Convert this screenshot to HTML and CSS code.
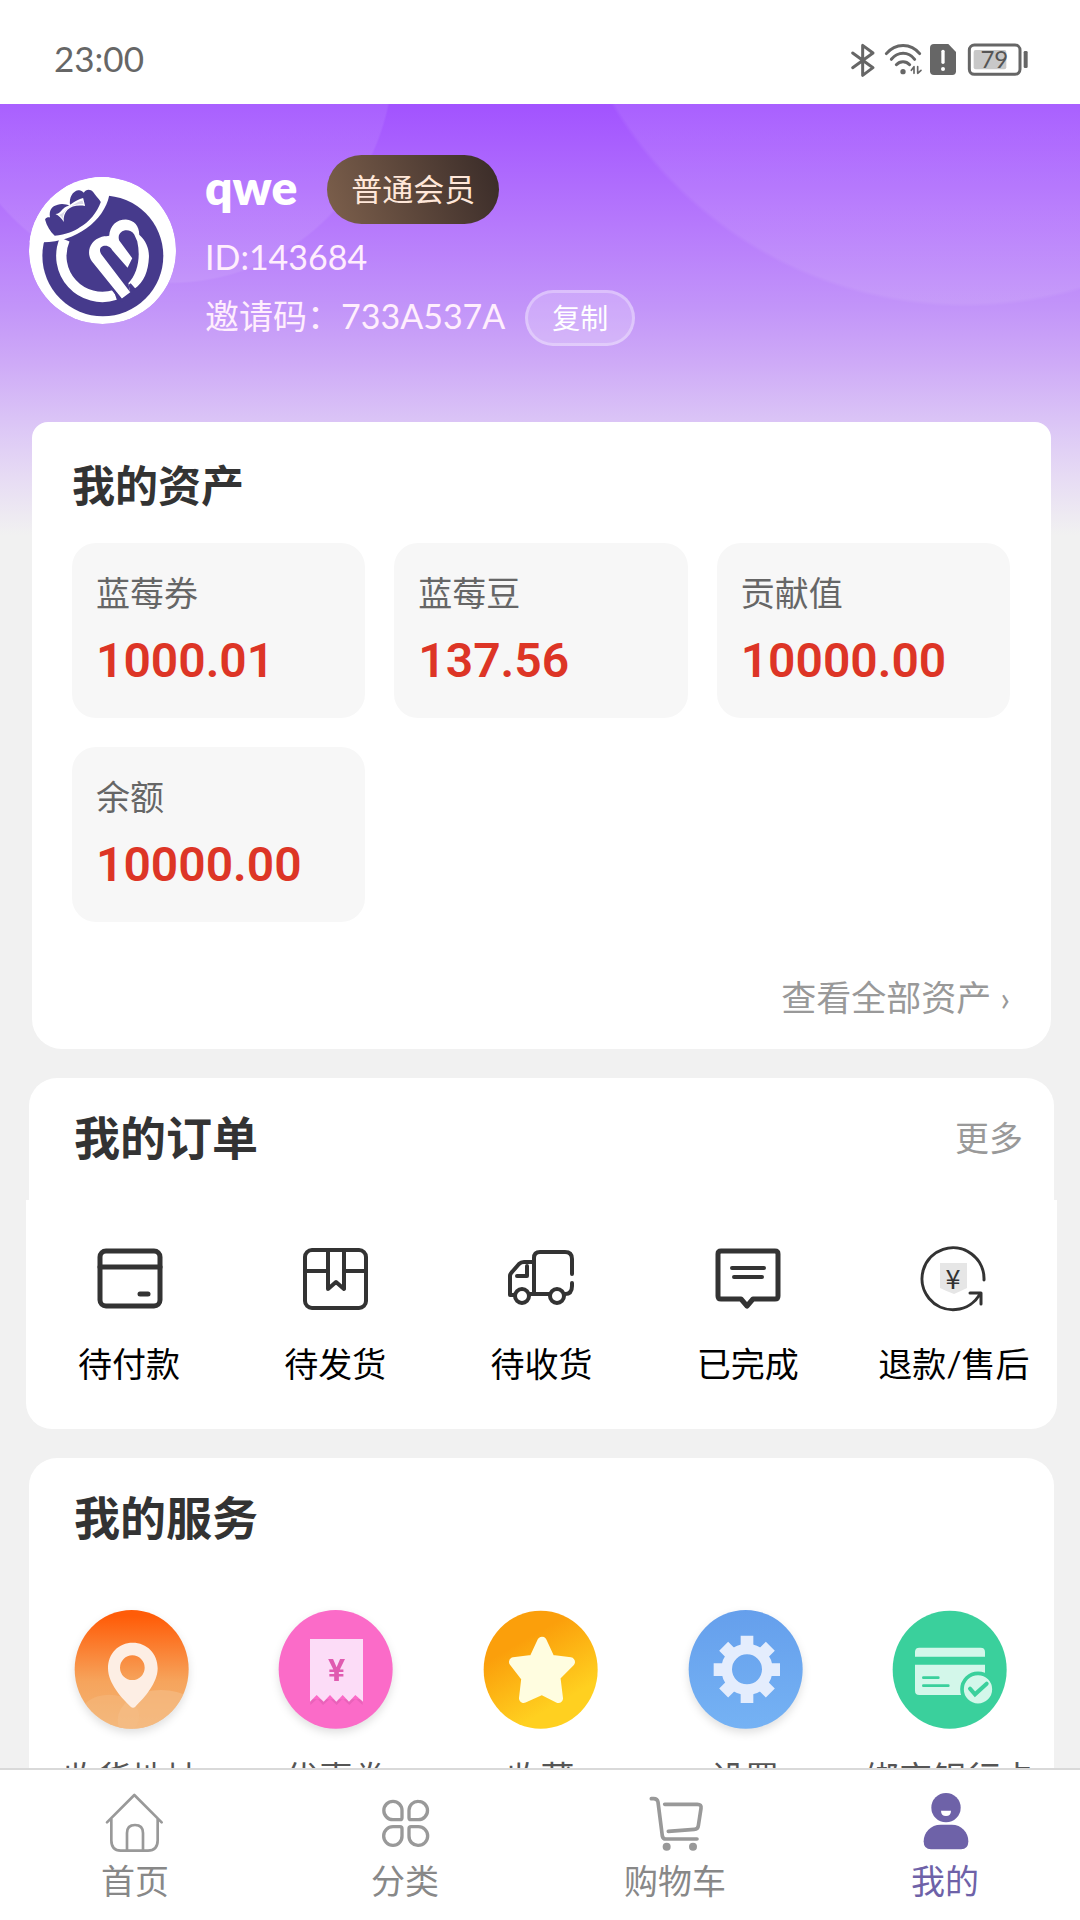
FILE: index.html
```html
<!DOCTYPE html>
<html lang="zh-CN">
<head>
    <meta charset="UTF-8">
    <meta name="viewport" content="width=device-width, initial-scale=1.0">
    <title>我的</title>
    <link rel="stylesheet" href="styles.css">
</head>
<body>
    <!-- Status bar -->
    <div class="status-bar">
        <span class="time">23:00</span>
        <svg class="status-icons" viewBox="60 30 540 120" fill="none" stroke="#666" stroke-width="9" stroke-linecap="round" stroke-linejoin="round">
            <path d="M68 69L129 113L98 136V46L129 69L68 113"/>
            <path d="M169 71C196 38 243 38 269 71M184 88C204 64 235 64 254 88M199 104C210 92 228 92 239 104"/>
            <circle cx="219" cy="125" r="8" fill="#666" stroke="none"/>
            <path d="M252 130V110L244 121M263 110V130L273 121" stroke-width="5"/>
            <path d="M312 42H355L378 66V124Q378 135 367 135H312Q300 135 300 124V54Q300 42 312 42Z" fill="#666" stroke="none"/>
            <path d="M339 64V97" stroke="#fff" stroke-width="10"/>
            <circle cx="339" cy="117" r="6" fill="#fff" stroke="none"/>
            <rect x="418" y="45" width="152" height="88" rx="15"/>
            <rect x="431" y="60" width="98" height="58" rx="6" fill="#c8c8c8" stroke="none"/>
            <rect x="581" y="63" width="12" height="51" rx="4" fill="#666" stroke="none"/>
            <text class="battery" x="493" y="114" text-anchor="middle">79</text>
        </svg>
    </div>

    <main class="page">
        <!-- User info -->
        <section class="profile">
            <svg class="avatar" viewBox="0 0 440 440">
                <circle cx="220" cy="220" r="220" fill="#fff"/>
                <circle cx="221" cy="236" r="181" fill="#463a8c"/>
                <path d="M0 0H240V55C225 130 140 195 42 195H0Z" fill="#fff"/>
                <!-- flower -->
                <path d="M77 176C64 163 53 147 48 127C52 121 57 120 63 121C59 101 68 87 86 83C99 79 112 82 123 86C119 61 131 43 147 40C153 38 159 42 164 47C170 36 184 35 192 45C199 56 208 63 215 75C203 107 181 135 151 151C139 161 110 172 77 176Z" fill="#463a8c"/>
                <path d="M79 111C97 108 96 96 112 88C125 86 135 70 162 63L168 87C128 80 101 99 104 135C98 124 91 117 79 111Z" fill="#fff"/>
                <path d="M89 114C105 109 112 92 128 86C138 80 148 73 160 70L163 81C130 80 103 94 101 125C98 120 94 116 89 114Z" fill="#463a8c" opacity="0.2"/>
                <!-- monogram -->
                <path d="M107 187A123 123 0 0 0 258 353" fill="none" stroke="#fff" stroke-width="31"/>
                <path d="M278 364L188 252C170 226 182 190 218 179C228 176 236 178 240 176C242 145 262 127 290 127C315 130 330 145 330 173C350 190 360 215 359 240C357 280 345 315 315 335L297 318L303 345Z" fill="#fff"/>
                <path d="M228 206C240 206 246 214 250 220L295 272L309 243L270 190C260 160 300 148 315 172L324 192C335 240 325 290 297 318L303 345L217 232C207 217 215 206 228 206Z" fill="#463a8c"/>
                <path d="M248 334L278 372M302 320L318 338" fill="none" stroke="#463a8c" stroke-width="6"/>
            </svg>
            <div class="user">
                <div class="name-row">
                    <h1>qwe</h1>
                    <span class="level">普通会员</span>
                </div>
                <div class="uid">ID:143684</div>
                <div class="invite">
                    <span>邀请码：733A537A</span>
                    <button class="copy" type="button">复制</button>
                </div>
            </div>
        </section>

        <!-- Assets -->
        <section class="card assets">
            <h2>我的资产</h2>
            <div class="asset-grid">
                <div class="asset"><span>蓝莓券</span><strong>1000.01</strong></div>
                <div class="asset"><span>蓝莓豆</span><strong>137.56</strong></div>
                <div class="asset"><span>贡献值</span><strong>10000.00</strong></div>
                <div class="asset"><span>余额</span><strong>10000.00</strong></div>
            </div>
            <a class="all-assets" href="#">查看全部资产 ›</a>
        </section>

        <!-- Orders -->
        <section class="card orders">
            <div class="card-head">
                <h2>我的订单</h2>
                <a href="#">更多</a>
            </div>
            <div class="order-list">
                <a href="#">
                    <svg viewBox="0 0 72 72">
                        <rect x="7" y="8" width="60" height="55" rx="6" stroke-width="5"/>
                        <path d="M7 24H67" stroke-width="5"/>
                        <path d="M47 51H55" stroke-width="5"/>
                    </svg>
                    待付款
                </a>
                <a href="#">
                    <svg viewBox="0 0 72 72">
                        <rect x="6" y="7" width="61" height="58" rx="7"/>
                        <path d="M6 28H29M45 28H67M29 8V46L37 39L45 46V8"/>
                    </svg>
                    待发货
                </a>
                <a href="#">
                    <svg viewBox="0 0 72 72">
                        <path d="M9 52H5V33Q5 31 7 29L14 21Q16 19 19 19H28M29 51V15Q29 9 35 9H60Q67 9 67 16V31M67 40V43Q67 51 60 51M25 51H44M22 23V33H12"/>
                        <circle cx="17" cy="53" r="7"/>
                        <circle cx="52" cy="53" r="7"/>
                    </svg>
                    待收货
                </a>
                <a href="#">
                    <svg viewBox="0 0 72 72">
                        <path d="M9 8H63Q66 8 66 11V53Q66 56 63 56H41L35 63L29 56H9Q6 56 6 53V11Q6 8 9 8Z" stroke-width="5"/>
                        <path d="M20 25H52M22 34H50" stroke-width="4"/>
                    </svg>
                    已完成
                </a>
                <a href="#">
                    <svg viewBox="0 0 72 72">
                        <path d="M22 20H49V45Q43 48 36 51Q28 48 22 45Z" fill="#e6e6e6" stroke="none"/>
                        <path d="M66 37A31 31 0 1 0 62 51M52 50H63V61" stroke-width="3"/>
                        <text class="refund-yen" x="35" y="46" text-anchor="middle">¥</text>
                    </svg>
                    退款/售后
                </a>
            </div>
        </section>

        <!-- Services -->
        <section class="card services">
            <div class="card-head">
                <h2>我的服务</h2>
            </div>
            <div class="service-list">
                <a href="#">
                    <svg class="shadow" viewBox="100 60 343 357">
                        <defs>
                            <linearGradient id="orange" x1="0" y1="0" x2="0" y2="1">
                                <stop offset="0.05" stop-color="#ff5c08"/>
                                <stop offset="0.6" stop-color="#f6a45c"/>
                                <stop offset="1" stop-color="#f3b475"/>
                            </linearGradient>
                            <clipPath id="pin-clip"><ellipse cx="272" cy="238" rx="171" ry="178"/></clipPath>
                        </defs>
                        <ellipse cx="272" cy="238" rx="171" ry="178" fill="url(#orange)"/>
                        <g clip-path="url(#pin-clip)" fill="#f5be88">
                            <ellipse cx="360" cy="390" rx="130" ry="90" opacity=".6"/>
                            <ellipse cx="205" cy="380" rx="90" ry="66" opacity=".4"/>
                        </g>
                        <path fill="#fdeee4" fill-rule="evenodd" d="M275 158C233 158 201 190 201 235C201 280 243 326 269 350Q276 356 283 350C312 322 350 278 350 235C350 190 317 158 275 158ZM274 196A37 37 0 1 1 274 270A37 37 0 1 1 274 196Z"/>
                    </svg>
                    收货地址
                </a>
                <a href="#">
                    <svg class="shadow" viewBox="715 60 343 357">
                        <ellipse cx="887" cy="238" rx="171" ry="178" fill="#fb6bc8"/>
                        <path d="M811 345L832 326L849 345L870 326L890 345L908 326L928 345L947 326L968 345V328L811 328Z" fill="#ea62ba"/>
                        <path d="M810 147H969V335L946 315L927 335L908 315L889 335L870 315L851 335L830 315L810 335Z" fill="#fcdcf7"/>
                        <text class="coupon-yen" x="890" y="272" text-anchor="middle">¥</text>
                    </svg>
                    优惠券
                </a>
                <a href="#">
                    <svg viewBox="1329 60 343 357">
                        <defs>
                            <linearGradient id="gold" x1="0.2" y1="0.1" x2="0.7" y2="1">
                                <stop offset="0.2" stop-color="#fb9f0b"/>
                                <stop offset="0.8" stop-color="#ffd020"/>
                            </linearGradient>
                        </defs>
                        <ellipse cx="1501" cy="239" rx="171" ry="177" fill="url(#gold)"/>
                        <path d="M1505 154L1530 208L1590 216L1546 260L1554 325L1505 300L1450 325L1457 264L1420 216L1480 208Z" fill="#fffde0" stroke="#fffde0" stroke-width="28" stroke-linejoin="round"/>
                    </svg>
                    收藏
                </a>
                <a href="#">
                    <svg class="shadow" viewBox="390 60 343 357">
                        <defs>
                            <linearGradient id="blue" x1="0" y1="0" x2="0" y2="1">
                                <stop offset="0" stop-color="#659fec"/>
                                <stop offset="1" stop-color="#75b2f4"/>
                            </linearGradient>
                        </defs>
                        <ellipse cx="562" cy="238" rx="171" ry="178" fill="url(#blue)"/>
                        <g stroke="#e4edfd" stroke-width="38" stroke-linecap="butt">
                            <path d="M566 137V188M566 288V339M466 239H515M616 239H665M496 169L530 203M600 273L636 309M496 309L530 275M600 205L636 169"/>
                        </g>
                        <circle cx="566" cy="238" r="61" fill="none" stroke="#e4edfd" stroke-width="32"/>
                    </svg>
                    设置
                </a>
                <a href="#">
                    <svg viewBox="1000 60 343 357">
                        <ellipse cx="1172" cy="239" rx="171" ry="177" fill="#3ad09c"/>
                        <path d="M1068 200V186Q1068 173 1081 173H1265Q1278 173 1278 186V200ZM1068 224H1278V315H1081Q1068 315 1068 302Z" fill="#d3f7ea"/>
                        <path d="M1093 263H1138M1093 287H1168" stroke="#3ad09c" stroke-width="8" stroke-linecap="round"/>
                        <circle cx="1257" cy="298" r="48" fill="#d3f7ea" stroke="#3ad09c" stroke-width="11"/>
                        <path d="M1233 296L1248 313L1283 281" fill="none" stroke="#3ad09c" stroke-width="12" stroke-linecap="round"/>
                    </svg>
                    绑定银行卡
                </a>
            </div>
        </section>
    </main>

    <!-- Bottom navigation -->
    <nav class="tab-bar">
        <a href="#">
            <svg viewBox="189 111 192 192" stroke-width="8">
                <path d="M201 202L283 120L365 202M214 192V256Q214 287 242 287H324Q353 287 353 256V192M261 287V234Q261 210 285 210Q309 210 309 234V287"/>
            </svg>
            首页
        </a>
        <a href="#">
            <svg viewBox="999 111 192 192" stroke-width="10">
                <path d="M1059 139A27 27 0 1 0 1059 194H1080Q1086 194 1086 188V166A27 27 0 0 0 1059 139Z"/>
                <path d="M1135 139A27 27 0 0 0 1107 166V188Q1107 194 1113 194H1135A27 27 0 1 0 1135 139Z"/>
                <path d="M1059 271A27 27 0 1 1 1059 215H1080Q1086 215 1086 221V243A27 27 0 0 1 1059 271Z"/>
                <path d="M1135 271A27 27 0 0 1 1107 243V221Q1107 215 1113 215H1135A27 27 0 1 1 1135 271Z"/>
            </svg>
            分类
        </a>
        <a href="#">
            <svg viewBox="249 111 192 192" stroke-width="11">
                <path d="M274 131H281Q292 131 294 141L307 243Q309 252 317 252H411M314 148H412Q425 148 423 160L415 212Q414 223 403 223L325 229"/>
                <g fill="#999" stroke="none">
                    <circle cx="320" cy="275" r="12"/>
                    <circle cx="399" cy="275" r="12"/>
                </g>
            </svg>
            购物车
        </a>
        <a class="active" href="#">
            <svg viewBox="1059 111 192 192">
                <g fill="#6e62a8" stroke="none">
                    <circle cx="1158" cy="158" r="44"/>
                    <path d="M1142 209H1175C1205 209 1225 232 1225 259Q1225 283 1203 283H1113Q1091 283 1091 259C1091 232 1112 209 1142 209Z"/>
                </g>
                <path d="M1143 167H1173Q1173 183 1158 183Q1143 183 1143 167Z" fill="#fff" stroke="none"/>
            </svg>
            我的
        </a>
    </nav>
</body>
</html>
```

FILE: styles.css
```css
* {
    box-sizing: border-box;
}

body {
    margin: 0;
    height: 100vh;
    display: flex;
    flex-direction: column;
    background: #f1f1f1;
    font-family: Lato, "Noto Sans CJK SC", sans-serif;
    font-size: 34px;
    color: #333;
}

h1, h2 {
    margin: 0;
}

a {
    color: inherit;
    text-decoration: none;
}

svg {
    display: block;
}

/* Status bar */
.status-bar {
    flex: none;
    display: flex;
    align-items: center;
    justify-content: space-between;
    height: 104px;
    padding: 16px 50px 0 54px;
    background: #fff;
}

.time {
    padding-bottom: 4px;
    font-size: 35px;
    color: #666;
}

.status-icons {
    width: 180px;
    height: 40px;
}

.battery {
    font-size: 72px;
    fill: #555;
    stroke: none;
}

/* Scrolling page */
.page {
    flex: 1;
    min-height: 0;
    overflow-y: auto;
    scrollbar-width: none;
    background:
        radial-gradient(circle 411px at 965px -208px, rgba(255, 255, 255, 0.08) 99%, transparent) no-repeat,
        radial-gradient(circle 224px at 170px -44px, rgba(255, 255, 255, 0.08) 99%, transparent) no-repeat,
        linear-gradient(#a253ff 0%, #b679fc 28%, #c294f9 47%, #ceaaf7 60%, #dbc5f6 74%, #e7dcf4 87%, #f1f1f1 100%) no-repeat;
    background-size: 100% 431px;
}

/* User info */
.profile {
    display: flex;
    align-items: center;
    gap: 29px;
    padding: 51px 29px 76px;
    color: #fff;
}

.avatar {
    flex: none;
    width: 147px;
    height: 147px;
    border-radius: 50%;
}

.user {
    display: flex;
    flex-direction: column;
    gap: 10px;
    font-size: 34px;
    color: #ffeefd;
}

.name-row {
    display: flex;
    align-items: center;
    gap: 30px;
}

.name-row h1 {
    padding-bottom: 6px;
    font-size: 48px;
    font-weight: 800;
    line-height: 60px;
    color: #fff;
}

.level {
    padding: 0 24px;
    border-radius: 35px;
    background: linear-gradient(70deg, #7d604c, #392b28);
    font-size: 31px;
    line-height: 69px;
    color: #ffe7d9;
}

.uid {
    line-height: 46px;
}

.invite {
    display: flex;
    align-items: center;
    gap: 20px;
}

.invite span {
    padding-bottom: 4px;
    line-height: 50px;
}

.copy {
    height: 56px;
    padding: 0 24px;
    border: 3px solid rgba(255, 255, 255, 0.3);
    border-radius: 28px;
    background: rgba(255, 255, 255, 0.2);
    font-family: inherit;
    font-size: 28px;
    line-height: 40px;
    color: #fff;
}

/* Cards */
.card {
    margin: 0 26px 29px 29px;
    border-radius: 28px;
    background: #fff;
}

.card-head {
    display: flex;
    align-items: center;
    justify-content: space-between;
    height: 122px;
    padding: 0 31px 2px 45px;
}

.card-head h2 {
    font-size: 46px;
    line-height: 60px;
}

.card-head a {
    padding-bottom: 4px;
    color: #999;
}

/* Assets */
.assets {
    margin: 0 29px 29px 32px;
    padding: 34px 41px 27px 40px;
    border-radius: 16px 16px 30px 30px;
}

.assets h2 {
    font-size: 43px;
    font-weight: 700;
    line-height: 60px;
}

.asset-grid {
    display: grid;
    grid-template-columns: repeat(3, 1fr);
    gap: 29px;
    margin-top: 27px;
}

.asset {
    display: flex;
    flex-direction: column;
    gap: 16px;
    height: 175px;
    padding: 26px 24px;
    border-radius: 24px;
    background: #f7f7f7;
}

.asset span {
    line-height: 48px;
    color: #666;
}

.asset strong {
    font-family: Roboto, sans-serif;
    font-size: 48px;
    font-weight: 600;
    line-height: 56px;
    color: #dd3526;
}

.all-assets {
    display: block;
    margin-top: 50px;
    font-size: 35px;
    line-height: 50px;
    text-align: right;
    color: #999;
}

/* Orders */
.order-list {
    display: grid;
    grid-template-columns: repeat(5, 1fr);
    margin: 0 -3px;
    padding: 43px 0 41px;
    border-radius: 0 0 26px 26px;
    background: #fff;
    color: #000;
}

.order-list a,
.service-list a {
    display: flex;
    flex-direction: column;
    align-items: center;
    line-height: 48px;
    white-space: nowrap;
}

.order-list svg {
    width: 72px;
    height: 72px;
    margin-bottom: 25px;
    fill: none;
    stroke: #333;
    stroke-width: 4px;
    stroke-linecap: round;
    stroke-linejoin: round;
}

.order-list text {
    fill: #333;
    stroke: none;
}

.refund-yen {
    font-family: "Noto Sans CJK SC", sans-serif;
    font-size: 27px;
}

/* Services */
.service-list {
    display: grid;
    grid-template-columns: repeat(5, 1fr);
    margin-right: 2px;
    padding: 30px 0;
    color: #555;
}

.service-list svg {
    width: 115px;
    height: 119px;
    margin-bottom: 25px;
}

.service-list .shadow {
    filter: drop-shadow(0 4px 4px rgba(0, 0, 0, 0.12));
}

.coupon-yen {
    font-family: Roboto, sans-serif;
    font-size: 96px;
    font-weight: 700;
    fill: #e05bb0;
}

/* Bottom navigation */
.tab-bar {
    flex: none;
    display: grid;
    grid-template-columns: repeat(4, 1fr);
    padding: 22px 0 17px;
    border-top: 2px solid #d9d9d9;
    background: #fff;
    color: #888;
}

.tab-bar a {
    display: flex;
    flex-direction: column;
    align-items: center;
    gap: 3px;
    line-height: 44px;
}

.tab-bar svg {
    width: 64px;
    height: 64px;
    fill: none;
    stroke: #999;
    stroke-linecap: round;
    stroke-linejoin: round;
}

.tab-bar .active {
    color: #6e62a8;
}
```
